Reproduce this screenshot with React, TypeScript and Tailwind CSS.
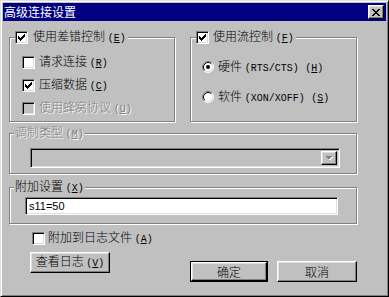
import React from "react";

const cjk = "font-['Noto_Sans_CJK_SC','Noto_Sans_CJK_JP',sans-serif]";
const mono = "font-['Liberation_Mono','Noto_Sans_CJK_SC',monospace]";
const raised =
  "border border-t-white border-l-white border-r-black border-b-black shadow-[inset_-1px_-1px_0_#808080,inset_1px_1px_0_#dfdfdf]";
const sunken =
  "border border-t-[#808080] border-l-[#808080] border-r-white border-b-white shadow-[inset_1px_1px_0_#000,inset_-1px_-1px_0_#dfdfdf]";
const disabledText = "text-[#808080] [text-shadow:1px_1px_0_#fff]";

function Pixels({ rows, color = "#000" }: { rows: string[]; color?: string }) {
  const w = rows[0].length;
  const h = rows.length;
  const rects: React.ReactElement[] = [];
  rows.forEach((r, y) =>
    r.split("").forEach((c, x) => {
      if (c === "X") rects.push(<rect key={`${x}-${y}`} x={x} y={y} width={1} height={1} fill={color} />);
    })
  );
  return (
    <svg width={w} height={h} viewBox={`0 0 ${w} ${h}`} shapeRendering="crispEdges">
      {rects}
    </svg>
  );
}

const CHECK = ["......X", ".....XX", "X...XXX", "XX.XXX.", "XXXXX..", ".XXX...", "..X...."];
const CLOSE = ["XX....XX", ".XX..XX.", "..XXXX..", "...XX...", "..XXXX..", ".XX..XX.", "XX....XX"];

function Acc({ k, disabled }: { k: string; disabled?: boolean }) {
  return (
    <span className={`${mono} font-normal text-[10px] ${disabled ? disabledText : ""}`}>
      (<span className="underline">{k}</span>)
    </span>
  );
}

function Check({ checked, disabled }: { checked?: boolean; disabled?: boolean }) {
  return (
    <span
      className={`${sunken} w-[13px] h-[13px] shrink-0 flex items-center justify-center ${
        disabled ? "bg-[#c0c0c0]" : "bg-white"
      }`}
    >
      {checked && <Pixels rows={CHECK} />}
    </span>
  );
}

function Radio({ checked }: { checked?: boolean }) {
  return (
    <svg width="12" height="12" viewBox="0 0 12 12" className="shrink-0">
      <circle cx="6" cy="6" r="5" fill="#fff" />
      <path d="M2.11 9.89 A5.5 5.5 0 0 1 9.89 2.11" fill="none" stroke="#808080" strokeWidth="1" />
      <path d="M9.89 2.11 A5.5 5.5 0 0 1 2.11 9.89" fill="none" stroke="#fff" strokeWidth="1" />
      <path d="M2.82 9.18 A4.5 4.5 0 0 1 9.18 2.82" fill="none" stroke="#000" strokeWidth="1" />
      <path d="M9.18 2.82 A4.5 4.5 0 0 1 2.82 9.18" fill="none" stroke="#dfdfdf" strokeWidth="1" />
      {checked && <circle cx="6" cy="6" r="2" fill="#000" />}
    </svg>
  );
}

function Group({
  label,
  className,
  labelClass = "ml-[4px] px-[1px]",
  children,
}: {
  label: React.ReactNode;
  className: string;
  labelClass?: string;
  children?: React.ReactNode;
}) {
  return (
    <div className={`border border-[#808080] shadow-[inset_1px_1px_0_#fff,1px_1px_0_#fff] ${className}`}>
      <div className={`-mt-[8px] ${labelClass} bg-[#c0c0c0] w-fit h-[14px] flex items-center leading-[14px]`}>
        {label}
      </div>
      {children}
    </div>
  );
}

function Button({ children, className }: { children: React.ReactNode; className: string }) {
  return (
    <div className={`${raised} ${className} flex items-center justify-center text-[12px] leading-[14px]`}>
      {children}
    </div>
  );
}

export default function App() {
  return (
    <div
      className={`${cjk} font-light w-[389px] h-[297px] bg-[#c0c0c0] text-black text-[12px] leading-[14px] border border-t-[#dfdfdf] border-l-[#dfdfdf] border-r-black border-b-black shadow-[inset_1px_1px_0_#fff,inset_-1px_-1px_0_#808080] p-[2px] flex flex-col overflow-hidden`}
    >
      {/* Title bar */}
      <div className="h-[18px] bg-[#000080] flex items-center pl-[1px] pr-[2px] shrink-0">
        <span className="text-white text-[12px] leading-[14px] font-normal">高级连接设置</span>
        <div className={`${raised} ml-auto w-[16px] h-[14px] bg-[#c0c0c0] flex items-center justify-center`}>
          <Pixels rows={CLOSE} />
        </div>
      </div>

      {/* Body */}
      <div className="flex flex-col pl-[6px] pr-[29px] pt-[16px]">
        <div className="flex gap-[15px]">
          <Group
            className="w-[166px] h-[85px]"
            labelClass="ml-[5px] pr-[2px]"
            label={
              <span className="flex items-center gap-[5px]">
                <Check checked />
                <span>
                  使用差错控制 <Acc k="E" />
                </span>
              </span>
            }
          >
            <div className="flex flex-col pt-[7px] pl-[12px]">
              <div className="h-[23px] flex items-center gap-[4px]">
                <Check />
                <span>
                  请求连接 <Acc k="R" />
                </span>
              </div>
              <div className="h-[23px] flex items-center gap-[4px]">
                <Check checked />
                <span>
                  压缩数据 <Acc k="C" />
                </span>
              </div>
              <div className="h-[23px] flex items-center gap-[4px]">
                <Check disabled />
                <span className={disabledText}>
                  使用蜂窝协议 <Acc k="U" disabled />
                </span>
              </div>
            </div>
          </Group>

          <Group
            className="w-[167px] h-[85px]"
            labelClass="ml-[5px] pr-[2px]"
            label={
              <span className="flex items-center gap-[4px]">
                <Check checked />
                <span>
                  使用流控制 <Acc k="F" />
                </span>
              </span>
            }
          >
            <div className="flex flex-col pt-[8px] pl-[11px]">
              <div className="h-[30px] flex items-center gap-[4px]">
                <Radio checked />
                <span>
                  硬件 <span className={`${mono} font-normal text-[10px]`}>(RTS/CTS)</span>{" "}
                  <span className="ml-[4px]">
                    <Acc k="H" />
                  </span>
                </span>
              </div>
              <div className="h-[30px] flex items-center gap-[4px]">
                <Radio />
                <span>
                  软件 <span className={`${mono} font-normal text-[10px]`}>(XON/XOFF)</span>{" "}
                  <span className="ml-[4px]">
                    <Acc k="S" />
                  </span>
                </span>
              </div>
            </div>
          </Group>
        </div>

        <Group
          className="w-[348px] h-[41px] mt-[11px]"
          label={
            <span className={disabledText}>
              调制类型 <Acc k="M" disabled />
            </span>
          }
        >
          <div className={`${sunken} mt-[8px] ml-[20px] w-[310px] h-[20px] bg-[#c0c0c0] p-[2px] flex justify-end`}>
            <div className={`${raised} w-[16px] h-full bg-[#c0c0c0] flex items-center justify-center`}>
              <svg width="8" height="5" viewBox="0 0 8 5" shapeRendering="crispEdges">
                <path d="M1 1h7L4.5 4.5z" fill="#fff" />
                <path d="M0 0h7L3.5 3.5z" fill="#808080" />
              </svg>
            </div>
          </div>
        </Group>

        <Group
          className="w-[348px] h-[37px] mt-[13px]"
          label={
            <span>
              附加设置 <Acc k="X" />
            </span>
          }
        >
          <div
            className={`${sunken} mt-[3px] ml-[15px] w-[313px] h-[18px] bg-white flex items-center pl-[3px] font-['Liberation_Sans',sans-serif] font-normal text-[11px]`}
          >
            s11=50
          </div>
        </Group>

        <div className="flex mt-[8px]">
          <div className="flex flex-col ml-[21px]">
            <div className="h-[13px] flex items-center gap-[3px] ml-[2px]">
              <Check />
              <span>
                附加到日志文件 <Acc k="A" />
              </span>
            </div>
            <Button className="mt-[7px] w-[80px] h-[21px]">
              <span>
                查看日志 <Acc k="V" />
              </span>
            </Button>
          </div>
          <div className="ml-auto mt-[29px] flex gap-[9px]">
            <div className="border border-black">
              <Button className="w-[76px] h-[19px]">确定</Button>
            </div>
            <Button className="w-[80px] h-[21px]">取消</Button>
          </div>
        </div>
      </div>
    </div>
  );
}
